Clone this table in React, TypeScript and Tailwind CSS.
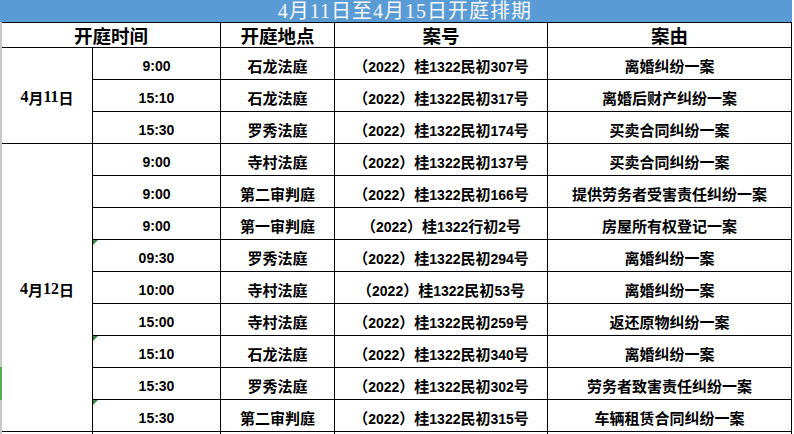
import React from "react";

type Row = { time: string; place: string; caseNo: string; reason: string; flag?: boolean };
type Group = { date: string; rows: Row[] };

const GROUPS: Group[] = [
  {
    date: "4月11日",
    rows: [
      { time: "9:00", place: "石龙法庭", caseNo: "（2022）桂1322民初307号", reason: "离婚纠纷一案" },
      { time: "15:10", place: "石龙法庭", caseNo: "（2022）桂1322民初317号", reason: "离婚后财产纠纷一案" },
      { time: "15:30", place: "罗秀法庭", caseNo: "（2022）桂1322民初174号", reason: "买卖合同纠纷一案" },
    ],
  },
  {
    date: "4月12日",
    rows: [
      { time: "9:00", place: "寺村法庭", caseNo: "（2022）桂1322民初137号", reason: "买卖合同纠纷一案" },
      { time: "9:00", place: "第二审判庭", caseNo: "（2022）桂1322民初166号", reason: "提供劳务者受害责任纠纷一案" },
      { time: "9:00", place: "第一审判庭", caseNo: "（2022）桂1322行初2号", reason: "房屋所有权登记一案" },
      { time: "09:30", place: "罗秀法庭", caseNo: "（2022）桂1322民初294号", reason: "离婚纠纷一案", flag: true },
      { time: "10:00", place: "寺村法庭", caseNo: "（2022）桂1322民初53号", reason: "离婚纠纷一案" },
      { time: "15:00", place: "寺村法庭", caseNo: "（2022）桂1322民初259号", reason: "返还原物纠纷一案" },
      { time: "15:10", place: "石龙法庭", caseNo: "（2022）桂1322民初340号", reason: "离婚纠纷一案", flag: true },
      { time: "15:30", place: "罗秀法庭", caseNo: "（2022）桂1322民初302号", reason: "劳务者致害责任纠纷一案" },
      { time: "15:30", place: "第二审判庭", caseNo: "（2022）桂1322民初315号", reason: "车辆租赁合同纠纷一案", flag: true },
    ],
  },
];

/** Split ASCII runs out so digits get the Arial-like face, CJK the other. */
function Mixed({ text, latin }: { text: string; latin: string }) {
  const parts = text.split(/([\x20-\x7e]+)/).filter(Boolean);
  return (
    <>
      {parts.map((p, i) =>
        /^[\x20-\x7e]+$/.test(p) ? (
          <span key={i} className={latin}>
            {p}
          </span>
        ) : (
          <span key={i}>{p}</span>
        ),
      )}
    </>
  );
}

const SANS_DIGITS = "font-['Liberation_Sans',sans-serif] text-[14px]";
const SERIF_DIGITS = "font-['Liberation_Serif',serif] text-[16px]";

function Cell({ children, flag }: { children?: React.ReactNode; flag?: boolean }) {
  return (
    <div className="relative flex h-[32px] items-center justify-center border-r border-b border-black pt-[4px] leading-none whitespace-nowrap">
      {flag && (
        <svg className="absolute top-0 left-0" width="5" height="5" viewBox="0 0 5 5">
          <polygon points="0,0 5,0 0,5" fill="#3b8a3b" />
        </svg>
      )}
      {children}
    </div>
  );
}

export default function App() {
  return (
    <div className="h-[434px] w-[794px] overflow-hidden bg-white font-['Noto_Sans_CJK_SC',sans-serif] text-black">
      <div className="flex h-[22px] w-[792px] items-center justify-center bg-[#5b9bd5] pl-[18px] font-['Liberation_Serif','Noto_Sans_CJK_SC',serif] text-[20px] leading-none tracking-[1px] text-[#f4f8fd]">
        4月11日至4月15日开庭排期
      </div>
      <div className="flex">
        <div className="flex w-[2px] flex-col">
          <div className="h-[345px] bg-[#c8c8c8]" />
          <div className="h-[33px] bg-[#4fae4f]" />
          <div className="h-[60px] bg-[#c8c8c8]" />
        </div>
        <div className="grid grid-cols-[91px_128px_114px_213px_244px] border-t border-black font-bold">
          <div className="col-span-2 flex h-[25px] items-center justify-center border-r border-b border-black text-[18.5px] leading-none">
            开庭时间
          </div>
          <div className="flex h-[25px] items-center justify-center border-r border-b border-black text-[18.5px] leading-none">
            开庭地点
          </div>
          <div className="flex h-[25px] items-center justify-center border-r border-b border-black text-[18.5px] leading-none">
            案号
          </div>
          <div className="flex h-[25px] items-center justify-center border-r border-b border-black text-[18.5px] leading-none">
            案由
          </div>

          {GROUPS.map((g) => (
            <React.Fragment key={g.date}>
              <div
                className={`flex items-center justify-center border-r border-b border-black pt-[3px] text-[15px] leading-none ${
                  g.rows.length === 3 ? "row-span-3" : "row-span-9"
                }`}
              >
                <Mixed text={g.date} latin={SERIF_DIGITS} />
              </div>
              {g.rows.map((r, i) => (
                <React.Fragment key={i}>
                  <Cell flag={r.flag}>
                    <span className={SANS_DIGITS}>{r.time}</span>
                  </Cell>
                  <Cell>
                    <span className="text-[15px]">{r.place}</span>
                  </Cell>
                  <Cell>
                    <span className="text-[15px]">
                      <Mixed text={r.caseNo} latin={SANS_DIGITS} />
                    </span>
                  </Cell>
                  <Cell>
                    <span className="text-[15px]">{r.reason}</span>
                  </Cell>
                </React.Fragment>
              ))}
            </React.Fragment>
          ))}

          {/* next day's rows start just below the fold */}
          <div className="border-r border-black" />
          <Cell />
          <Cell />
          <Cell />
          <Cell />
        </div>
      </div>
    </div>
  );
}
